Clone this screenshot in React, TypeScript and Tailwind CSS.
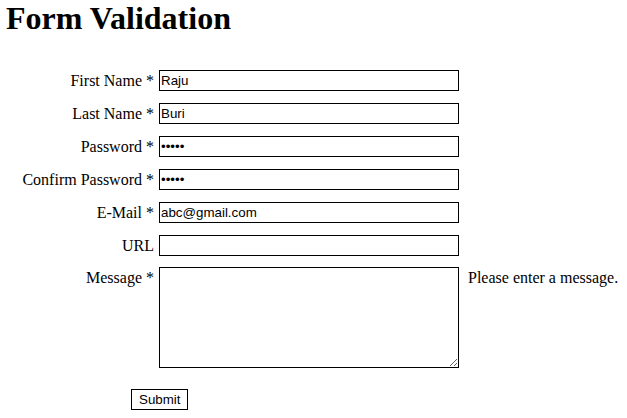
import React from "react";

const fields = [
  { label: "First Name *", type: "text", value: "Raju" },
  { label: "Last Name *", type: "text", value: "Buri" },
  { label: "Password *", type: "password", value: "12345" },
  { label: "Confirm Password *", type: "password", value: "12345" },
  { label: "E-Mail *", type: "text", value: "abc@gmail.com" },
  { label: "URL", type: "text", value: "" },
];

const serif = "font-['Liberation_Serif',serif]";
const inputBox =
  "w-[300px] h-[21px] border border-black bg-white px-[1px] text-[13.33px] text-black font-['Liberation_Sans',Arial,sans-serif] outline-none";

const App = () => {
  return (
    <div className={`w-[627px] h-[418px] bg-white text-black ${serif}`}>
      <h1 className="pl-[6px] pt-[1px] text-[32px] font-bold leading-[35px]">
        Form Validation
      </h1>

      <form className="mt-[28px] flex flex-col" onSubmit={(e) => e.preventDefault()}>
        {fields.map((f, i) => (
          <div key={i} className="flex items-center h-[33px]">
            <label className="w-[155px] shrink-0 text-right text-[16px] leading-[18px] pr-[1px]">
              {f.label}
            </label>
            <input
              type={f.type}
              defaultValue={f.value}
              className={`ml-[4px] ${inputBox}`}
            />
          </div>
        ))}

        <div className="flex items-start pt-[5px]">
          <label className="w-[155px] shrink-0 text-right text-[16px] leading-[18px] pr-[1px] pt-[2px]">
            Message *
          </label>
          <textarea className="ml-[4px] w-[300px] h-[101px] border border-black bg-white outline-none" />
          <span className="ml-[9px] pt-[2px] text-[16px] leading-[18px]">
            Please enter a message.
          </span>
        </div>

        <div className="mt-[19px] pl-[131px]">
          <button
            type="submit"
            className="h-[21px] px-[7px] border border-black bg-white text-[13.33px] leading-[15px] font-['Liberation_Sans',Arial,sans-serif]"
          >
            Submit
          </button>
        </div>
      </form>
    </div>
  );
};

export default App;
